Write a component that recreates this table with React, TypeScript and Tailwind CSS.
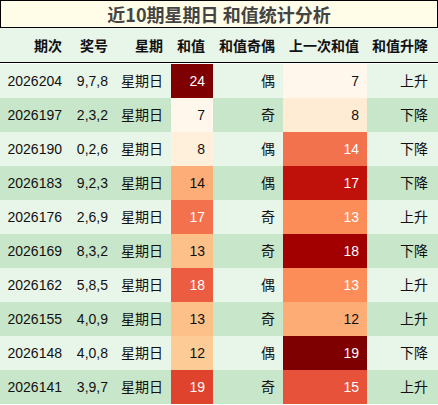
type Row = {
  issue: string
  nums: string
  day: string
  sum: number
  sumBg: string
  sumLight: boolean
  parity: string
  prev: number
  prevBg: string
  prevLight: boolean
  trend: string
}

const rows: Row[] = [
  { issue: '2026204', nums: '9,7,8', day: '星期日', sum: 24, sumBg: 'bg-[#7f0000]', sumLight: true, parity: '偶', prev: 7, prevBg: 'bg-[#fff7ec]', prevLight: false, trend: '上升' },
  { issue: '2026197', nums: '2,3,2', day: '星期日', sum: 7, sumBg: 'bg-[#fff7ec]', sumLight: false, parity: '奇', prev: 8, prevBg: 'bg-[#feedd4]', prevLight: false, trend: '下降' },
  { issue: '2026190', nums: '0,2,6', day: '星期日', sum: 8, sumBg: 'bg-[#fff0db]', sumLight: false, parity: '偶', prev: 14, prevBg: 'bg-[#f3724e]', prevLight: true, trend: '下降' },
  { issue: '2026183', nums: '9,2,3', day: '星期日', sum: 14, sumBg: 'bg-[#fdae78]', sumLight: false, parity: '偶', prev: 17, prevBg: 'bg-[#bf100a]', prevLight: true, trend: '下降' },
  { issue: '2026176', nums: '2,6,9', day: '星期日', sum: 17, sumBg: 'bg-[#f3714d]', sumLight: true, parity: '奇', prev: 13, prevBg: 'bg-[#fc8d59]', prevLight: true, trend: '上升' },
  { issue: '2026169', nums: '8,3,2', day: '星期日', sum: 13, sumBg: 'bg-[#fdc089]', sumLight: false, parity: '奇', prev: 18, prevBg: 'bg-[#a20000]', prevLight: true, trend: '下降' },
  { issue: '2026162', nums: '5,8,5', day: '星期日', sum: 18, sumBg: 'bg-[#eb5c41]', sumLight: true, parity: '偶', prev: 13, prevBg: 'bg-[#fc8d59]', prevLight: true, trend: '上升' },
  { issue: '2026155', nums: '4,0,9', day: '星期日', sum: 13, sumBg: 'bg-[#fdc089]', sumLight: false, parity: '奇', prev: 12, prevBg: 'bg-[#fdac76]', prevLight: false, trend: '上升' },
  { issue: '2026148', nums: '4,0,8', day: '星期日', sum: 12, sumBg: 'bg-[#fdcb95]', sumLight: false, parity: '偶', prev: 19, prevBg: 'bg-[#7f0000]', prevLight: true, trend: '下降' },
  { issue: '2026141', nums: '3,9,7', day: '星期日', sum: 19, sumBg: 'bg-[#df422d]', sumLight: true, parity: '奇', prev: 15, prevBg: 'bg-[#e7533a]', prevLight: true, trend: '上升' },
]

const cols = 'grid grid-cols-[70px_46px_55px_42px_70px_84px_69px]'
const cell = 'flex items-center justify-end pr-2'

export default function App() {
  return (
    <div className="w-[438px] h-[405px] bg-white font-['Liberation_Sans','Noto_Sans_CJK_SC',sans-serif] text-[14px] text-[#111]">
      <div className="h-[28px] border border-black bg-[#fffde7] flex items-center justify-center text-[18px] font-bold text-[#444] font-['Noto_Sans_CJK_SC',sans-serif]">
        近10期星期日 和值统计分析
      </div>
      <div className={`${cols} h-[35px] bg-[#e8f5e9] border-b border-black font-bold font-['Noto_Sans_CJK_SC',sans-serif]`}>
        <div className={cell}>期次</div>
        <div className={cell}>奖号</div>
        <div className={cell}>星期</div>
        <div className={cell}>和值</div>
        <div className={cell}>和值奇偶</div>
        <div className={cell}>上一次和值</div>
        <div className={cell}>和值升降</div>
      </div>
      <div className="pt-px">
        {rows.map((r, i) => (
          <div
            key={r.issue}
            className={`${cols} h-[34px] ${i % 2 === 0 ? 'bg-[#e8f5e9]' : 'bg-[#c8e6c9]'}`}
          >
            <div className={cell}>{r.issue}</div>
            <div className={cell}>{r.nums}</div>
            <div className={cell}>{r.day}</div>
            <div className={`${cell} ${r.sumBg} ${r.sumLight ? 'text-white' : ''}`}>{r.sum}</div>
            <div className={cell}>{r.parity}</div>
            <div className={`${cell} ${r.prevBg} ${r.prevLight ? 'text-white' : ''}`}>{r.prev}</div>
            <div className={cell}>{r.trend}</div>
          </div>
        ))}
      </div>
    </div>
  )
}
